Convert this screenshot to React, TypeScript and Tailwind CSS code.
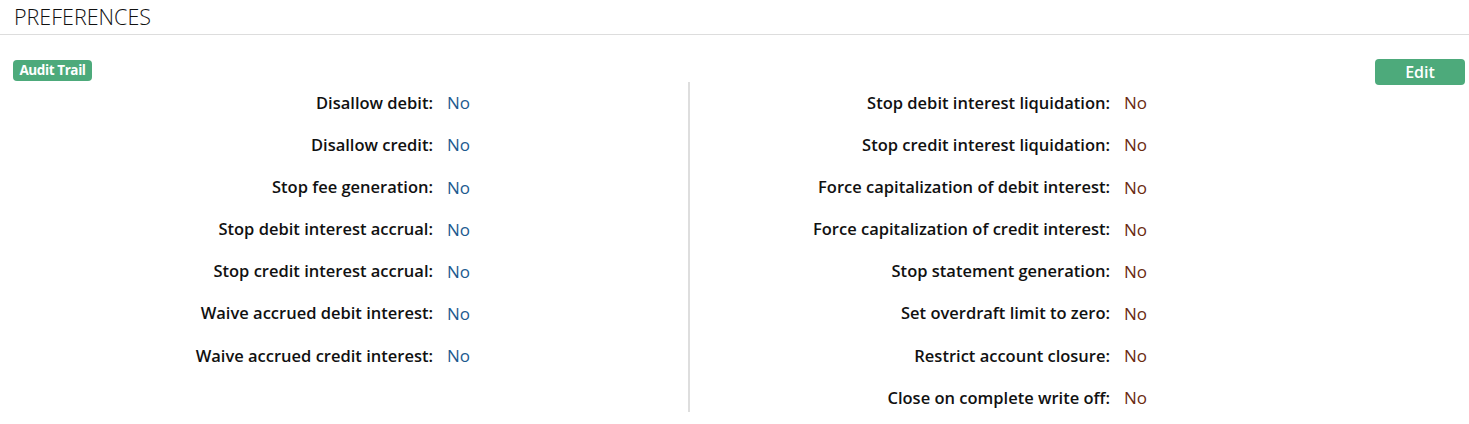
import React from "react";

const left = [
  "Disallow debit:",
  "Disallow credit:",
  "Stop fee generation:",
  "Stop debit interest accrual:",
  "Stop credit interest accrual:",
  "Waive accrued debit interest:",
  "Waive accrued credit interest:",
];

const right = [
  "Stop debit interest liquidation:",
  "Stop credit interest liquidation:",
  "Force capitalization of debit interest:",
  "Force capitalization of credit interest:",
  "Stop statement generation:",
  "Set overdraft limit to zero:",
  "Restrict account closure:",
  "Close on complete write off:",
];

export default function App() {
  return (
    <div
      className="w-[1469px] h-[424px] bg-white text-[#111] overflow-hidden"
      style={{ fontFamily: '"Open Sans", "Noto Sans", sans-serif' }}
    >
      <div className="h-[35px] border-b border-[#dddddd] pl-[14px] flex items-center">
        <span className="text-[21.5px] font-light leading-none">PREFERENCES</span>
      </div>
      <div className="h-[47px] flex justify-between items-start pt-[24px] pl-[13px] pr-[4px]">
        <button className="mt-[1px] h-[21px] w-[79px] rounded-[4px] bg-[#4daa7b] text-white text-[13.5px] font-bold leading-none flex items-center justify-center tracking-[-0.4px]">
          Audit Trail
        </button>
        <button className="h-[26px] w-[90px] rounded-[4px] bg-[#4daa7b] text-white text-[16px] font-semibold leading-none flex items-center justify-center">
          Edit
        </button>
      </div>
      <div className="flex items-start">
        <div className="w-[688px] flex flex-col">
          {left.map((l) => (
            <div key={l} className="h-[42.15px] flex items-center text-[16.5px]">
              <div className="w-[433px] text-right font-semibold">{l}</div>
              <div className="pl-[14px] text-[#1c5a8f] text-[17px]">No</div>
            </div>
          ))}
        </div>
        <div className="w-[2px] h-[330px] bg-[#dedede]" />
        <div className="flex-1 flex flex-col">
          {right.map((l) => (
            <div key={l} className="h-[42.15px] flex items-center text-[16.5px]">
              <div className="w-[420px] text-right font-semibold">{l}</div>
              <div className="pl-[14px] text-[#6a2a10] text-[17px]">No</div>
            </div>
          ))}
        </div>
      </div>
    </div>
  );
}
